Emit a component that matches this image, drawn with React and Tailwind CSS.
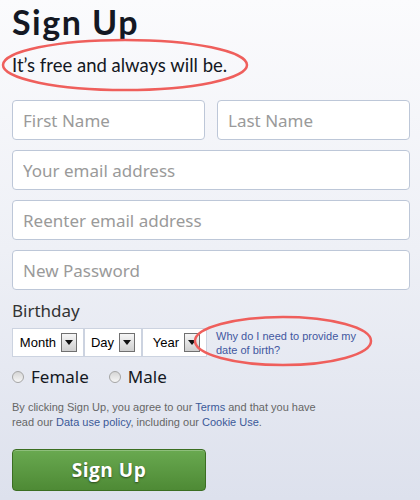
import React from 'react';

const inputCls =
  "h-10 rounded-[4px] border border-[#bdc7d8] bg-white px-[10px] text-[17px] text-[#141823] placeholder-[#9a9a9a] outline-none font-['Noto_Sans','Liberation_Sans',sans-serif]";

const DropBtn = () => (
  <span className="flex h-[19px] w-[16px] items-center justify-center border border-[#707070] bg-gradient-to-b from-[#f6f6f6] to-[#cfcfcf]">
    <svg width="8" height="5" viewBox="0 0 8 5">
      <path d="M0 0h8L4 5z" fill="#111" />
    </svg>
  </span>
);

const BirthSelect = ({ label, width }) => (
  <div
    className={`flex h-[29px] items-center justify-end gap-[5px] border border-[#ccd3e0] bg-white pr-[6px] font-['Liberation_Sans',sans-serif] text-[13px] text-black ${width}`}
  >
    <span>{label}</span>
    <DropBtn />
  </div>
);

const Radio = ({ label }) => (
  <label className="flex items-center gap-[7px]">
    <span className="h-[12px] w-[12px] rounded-full border border-[#a5a5a5] bg-gradient-to-b from-[#d6d6d6] to-[#f6f6f6]" />
    <span className="text-[17px] leading-[20px] text-[#141823]">{label}</span>
  </label>
);

export default function App() {
  return (
    <div className="relative min-h-[500px] w-full overflow-hidden bg-gradient-to-b from-[#fbfbfd] via-[#eef0f6] to-[#dde1ed] pl-[12px] pr-[10px] pt-[2px] font-['Noto_Sans','Liberation_Sans',sans-serif]">
      <h1 className="font-['Lato',sans-serif] text-[34px] font-bold leading-[40px] tracking-[1.5px] text-[#141823]">
        Sign Up
      </h1>
      <p className="mt-[11px] font-['Lato',sans-serif] text-[18.5px] leading-[24px] text-[#141823]">
        It’s free and always will be.
      </p>

      <div className="mt-[23px] flex flex-col gap-[10px]">
        <div className="grid grid-cols-2 gap-[12px]">
          <input className={inputCls} placeholder="First Name" />
          <input className={inputCls} placeholder="Last Name" />
        </div>
        <input className={inputCls} placeholder="Your email address" />
        <input className={inputCls} placeholder="Reenter email address" />
        <input className={inputCls} type="password" placeholder="New Password" />
      </div>

      <div className="mt-[11px] text-[17px] leading-[20px] text-[#333]">Birthday</div>

      <div className="mt-[7px] flex items-center">
        <BirthSelect label="Month" width="w-[72px]" />
        <BirthSelect label="Day" width="w-[58px]" />
        <BirthSelect label="Year" width="w-[65px]" />
        <a
          className="ml-[9px] flex flex-col font-['Liberation_Sans',sans-serif] text-[11px] leading-[14px] text-[#4257a0]"
          href="#"
        >
          <span>Why do I need to provide my</span>
          <span>date of birth?</span>
        </a>
      </div>

      <div className="mt-[10px] flex items-center gap-[20px]">
        <Radio label="Female" />
        <Radio label="Male" />
      </div>

      {/* terms, one block per line */}
      <div className="mt-[13px] font-['Liberation_Sans',sans-serif] text-[11px] leading-[15px] text-[#666]">
        <p>
          <span>By clicking Sign Up, you agree to our </span>
          <a className="text-[#3b5998]" href="#">Terms</a>
          <span> and that you have</span>
        </p>
        <p>
          <span>read our </span>
          <a className="text-[#3b5998]" href="#">Data use policy</a>
          <span>, including our </span>
          <a className="text-[#3b5998]" href="#">Cookie Use</a>
          <span>.</span>
        </p>
      </div>

      <button className="mt-[19px] flex h-[42px] w-[194px] items-center justify-center rounded-[4px] border border-[#3b6e22] bg-gradient-to-b from-[#69a950] to-[#4e8a35] font-['Open_Sans',sans-serif] text-[19px] font-bold tracking-[0.5px] text-white [text-shadow:0_1px_2px_rgba(0,0,0,0.5)] shadow-[inset_0_1px_0_rgba(255,255,255,0.25)]">
        Sign Up
      </button>

      {/* red annotation circles */}
      <svg className="pointer-events-none absolute left-0 top-0" width="420" height="500">
        <ellipse cx="125" cy="65" rx="122" ry="25" fill="none" stroke="#ef5f5c" strokeWidth="2.5" />
        <ellipse cx="283" cy="341" rx="88" ry="24" fill="none" stroke="#ef5f5c" strokeWidth="2.5" />
      </svg>
    </div>
  );
}
